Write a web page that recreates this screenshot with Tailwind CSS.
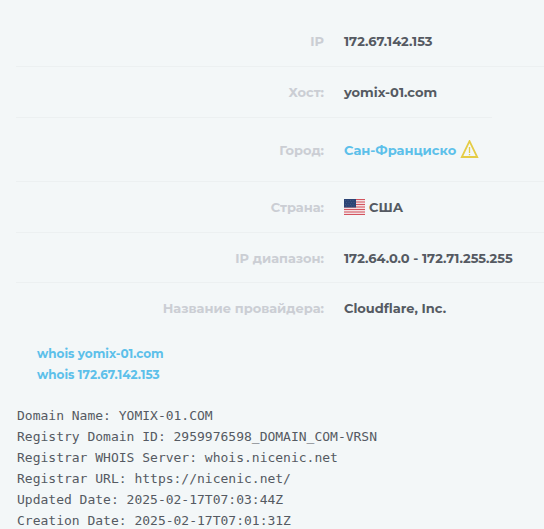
<!DOCTYPE html>
<html lang="ru">
<head>
    <meta charset="UTF-8">
    <meta name="viewport" content="width=device-width, initial-scale=1.0">
    <title>Whois yomix-01.com</title>
    <script src="https://cdn.jsdelivr.net/npm/@tailwindcss/browser@4"></script>
</head>
<body class="bg-[#f3f7f8] text-[#555a62] font-['Montserrat','Inter',sans-serif] text-[13px] leading-5 font-bold">

<!-- IP info -->
<div class="pl-4 pt-4">
    <div class="flex items-center h-[50px]">
        <div class="w-7/12 text-right text-[#cbced4]">IP</div>
        <div class="pl-5">172.67.142.153</div>
    </div>
    <hr class="border-[#ecf0f1]">
    <div class="flex items-center h-[50px]">
        <div class="w-7/12 text-right text-[#cbced4]">Хост:</div>
        <div class="pl-5">yomix-01.com</div>
    </div>
    <hr class="border-[#ecf0f1] mr-[52px]">
    <div class="flex items-center h-[63px]">
        <div class="w-7/12 text-right text-[#cbced4]">Город:</div>
        <div class="flex items-center gap-1 pl-5">
            <a href="#" class="text-[#5cc0ea]">Сан-Франциско</a>
            <svg class="size-5" viewBox="0 0 20 20" fill="none" stroke="#e5cc45">
                <path d="M9.5 1.2 17.2 17H1.8Z" stroke-width="1.8"/>
                <path d="M9.5 7v6M9.5 14v1.3" stroke-width="1.3"/>
            </svg>
        </div>
    </div>
    <hr class="border-[#ecf0f1]">
    <div class="flex items-center h-[50px]">
        <div class="w-7/12 text-right text-[#cbced4]">Страна:</div>
        <div class="flex items-center gap-1 pl-5">
            <svg class="w-[21px] h-4" viewBox="0 0 21 16">
                <path fill="#f3dfe2" d="M0 0h21v16H0z"/>
                <path stroke="#d3545f" d="M0 .5h21M0 3h21M0 5.5h21M0 8h21M0 10.5h21M0 13h21M0 15.5h21"/>
                <path fill="#2c4475" d="M0 0h12v8.5H0z"/>
                <path stroke="#4a5e8a" stroke-width=".7" stroke-dasharray="1 1.5" d="M1 1.5h10M2 3.5h9M1 5.5h10M2 7h9"/>
            </svg>
            <span>США</span>
        </div>
    </div>
    <hr class="border-[#ecf0f1]">
    <div class="flex items-center h-[49px]">
        <div class="w-7/12 text-right text-[#cbced4]">IP диапазон:</div>
        <div class="pl-5">172.64.0.0 - 172.71.255.255</div>
    </div>
    <hr class="border-[#ecf0f1]">
    <div class="flex items-center h-[50px]">
        <div class="w-7/12 text-right text-[#cbced4]">Название провайдера:</div>
        <div class="pl-5">Cloudflare, Inc.</div>
    </div>
</div>

<!-- Whois links -->
<div class="flex flex-col items-start pl-[37px] pt-[10px] text-xs leading-[21px] text-[#5cc0ea]">
    <a href="#">whois yomix-01.com</a>
    <a href="#">whois 172.67.142.153</a>
</div>

<!-- Whois output -->
<pre class="pl-[17px] pt-5 font-['Consolas','DejaVu_Sans_Mono',monospace] font-normal leading-[21px]">Domain Name: YOMIX-01.COM
Registry Domain ID: 2959976598_DOMAIN_COM-VRSN
Registrar WHOIS Server: whois.nicenic.net
Registrar URL: https://nicenic.net/
Updated Date: 2025-02-17T07:03:44Z
Creation Date: 2025-02-17T07:01:31Z</pre>

</body>
</html>
